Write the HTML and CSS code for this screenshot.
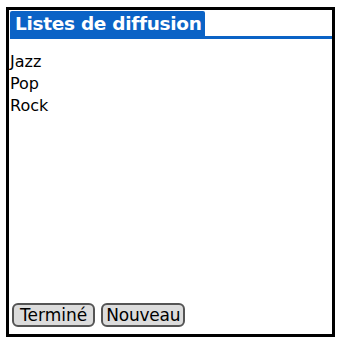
FILE: index.html
```html
<!DOCTYPE html>
<html>
<head>
<meta charset="utf-8">
<link rel="stylesheet" href="styles.css">
</head>
<body>
<div class="frame">
  <div class="titlebar">
    <div class="tab">Listes de diffusion</div>
  </div>
  <ul class="list">
    <li>Jazz</li>
    <li>Pop</li>
    <li>Rock</li>
  </ul>
  <div class="buttons">
    <button class="btn btn-done">Terminé</button>
    <button class="btn btn-new">Nouveau</button>
  </div>
</div>
</body>
</html>
```
FILE: styles.css
```css
html, body {
  margin: 0;
  padding: 0;
  background: #fff;
}
body {
  width: 337px;
  height: 342px;
  overflow: hidden;
  font-family: "DejaVu Sans", sans-serif;
}
.frame {
  margin: 7px 0 0 6px;
  width: 323px;
  height: 324px;
  border: 3px solid #000;
  display: flex;
  flex-direction: column;
}
.titlebar {
  display: flex;
  align-items: flex-end;
  margin: 1px 0 0 1px;
  border-bottom: 3px solid #0b63c6;
}
.tab {
  background: #0b63c6;
  color: #fff;
  font-weight: bold;
  font-size: 18.5px;
  height: 25px;
  line-height: 25px;
  width: 190px;
  padding-left: 5px;
  border-radius: 2px 2px 0 0;
  white-space: nowrap;
  letter-spacing: -0.3px;
}
.list {
  list-style: none;
  margin: 12px 0 0 1px;
  padding: 0;
  flex: 1;
  font-size: 16px;
  line-height: 22px;
  color: #000;
}
.buttons {
  display: flex;
  gap: 6px;
  margin: 0 0 7px 3px;
}
.btn {
  font-family: "DejaVu Sans", sans-serif;
  font-size: 17px;
  color: #000;
  background: #dcdcdc;
  border: 2px solid #555;
  border-radius: 6px;
  height: 24px;
  padding: 0 4px;
  line-height: 18px;
  margin: 0;
}
.btn-done {
  padding: 0 6px;
}
.btn-new {
  padding: 0 3px;
  letter-spacing: -0.2px;
}
```
